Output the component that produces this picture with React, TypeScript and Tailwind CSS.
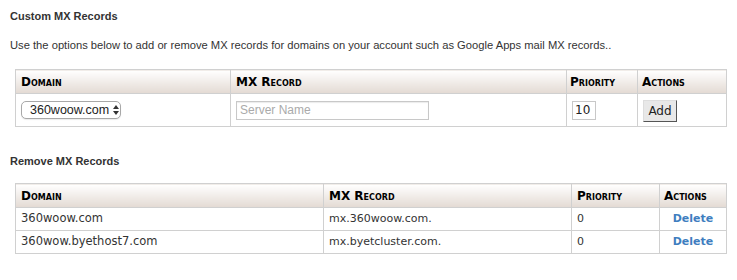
import React from 'react';

interface MxRecord {
  domain: string;
  record: string;
  priority: number;
}

const records: MxRecord[] = [
  { domain: '360woow.com', record: 'mx.360woow.com.', priority: 0 },
  { domain: '360wow.byethost7.com', record: 'mx.byetcluster.com.', priority: 0 },
];

const thClass =
  "h-[24px] px-[5px] text-left align-middle text-[12px] font-bold text-black [font-variant:small-caps] bg-[linear-gradient(#ffffff,#e3dad3)] border border-[#d0d0d0]";

const App: React.FC = () => {
  return (
    <div className="w-[737px] h-[280px] bg-white text-[#333] font-['Liberation_Sans',Arial,sans-serif]">
      <div className="pl-[10px] pt-[9px]">
        <h2 className="text-[11px] font-bold leading-[14px] text-[#333]">Custom MX Records</h2>
        <p className="mt-[15px] text-[11.2px] leading-[14px] text-[#333]">
          Use the options below to add or remove MX records for domains on your account such as Google Apps mail MX records..
        </p>
      </div>

      <table className="ml-[15px] mt-[17px] w-[711px] border-collapse font-['DejaVu_Sans',Verdana,sans-serif] table-fixed">
        <colgroup>
          <col className="w-[215px]" />
          <col className="w-[336px]" />
          <col className="w-[71px]" />
          <col className="w-[89px]" />
        </colgroup>
        <thead>
          <tr>
            <th className={thClass}>Domain</th>
            <th className={thClass}>MX Record</th>
            <th className={thClass + " pl-[3px]"}>Priority</th>
            <th className={thClass + " pl-[4px]"}>Actions</th>
          </tr>
        </thead>
        <tbody>
          <tr className="h-[33px]">
            <td className="border border-[#d0d0d0] px-[5px] align-middle">
              <div className="flex h-[18px] w-[100px] items-center rounded-[5px] border border-[#a8a8a8] bg-white pl-[8px] text-[#222] font-['Liberation_Sans',Arial,sans-serif] shadow-[0_1px_1px_rgba(0,0,0,0.08)]">
                <span className="text-[12.5px] leading-none">360woow.com</span>
                <svg className="ml-[4px]" width="6" height="10" viewBox="0 0 6 10">
                  <path d="M3 0 L6 4 L0 4 Z" fill="#333" />
                  <path d="M3 10 L6 6 L0 6 Z" fill="#333" />
                </svg>
              </div>
            </td>
            <td className="border border-[#d0d0d0] px-[5px] align-middle">
              <input
                type="text"
                placeholder="Server Name"
                className="block h-[19px] w-[193px] border border-[#c8c8c8] bg-white px-[3px] text-[12px] font-['Liberation_Sans',Arial,sans-serif] placeholder:text-[#aaa] shadow-[inset_0_1px_1px_rgba(0,0,0,0.08)] outline-none"
              />
            </td>
            <td className="border border-[#d0d0d0] pl-[5px] align-middle">
              <input
                type="text"
                defaultValue="10"
                className="block h-[19px] w-[24px] border border-[#c8c8c8] bg-white px-[2px] text-[12px] text-[#222] outline-none"
              />
            </td>
            <td className="border border-[#d0d0d0] pl-[5px] align-middle">
              <button className="h-[22px] w-[34px] border border-t-[#ddd] border-l-[#ddd] border-b-[#555] border-r-[#555] bg-[#e8e8e8] text-[12px] text-[#222]">
                Add
              </button>
            </td>
          </tr>
        </tbody>
      </table>

      <h2 className="ml-[10px] mt-[27px] text-[11px] font-bold leading-[14px] text-[#333]">Remove MX Records</h2>

      <table className="ml-[15px] mt-[15px] w-[711px] border-collapse font-['DejaVu_Sans',Verdana,sans-serif] table-fixed">
        <colgroup>
          <col className="w-[308px]" />
          <col className="w-[248px]" />
          <col className="w-[88px]" />
          <col className="w-[67px]" />
        </colgroup>
        <thead>
          <tr>
            <th className={thClass}>Domain</th>
            <th className={thClass}>MX Record</th>
            <th className={thClass}>Priority</th>
            <th className={thClass + " pl-[4px]"}>Actions</th>
          </tr>
        </thead>
        <tbody>
          {records.map((r) => (
            <tr key={r.domain} className="h-[23px] text-[11px] text-[#333]">
              <td className="border border-[#d0d0d0] px-[5px] text-[11.5px] align-middle">{r.domain}</td>
              <td className="border border-[#d0d0d0] px-[5px] align-middle">{r.record}</td>
              <td className="border border-[#d0d0d0] px-[5px] align-middle">{r.priority}</td>
              <td className="border border-[#d0d0d0] text-center align-middle">
                <a href="#" className="font-bold text-[#3f7ec0]">Delete</a>
              </td>
            </tr>
          ))}
        </tbody>
      </table>
    </div>
  );
};

export default App;
